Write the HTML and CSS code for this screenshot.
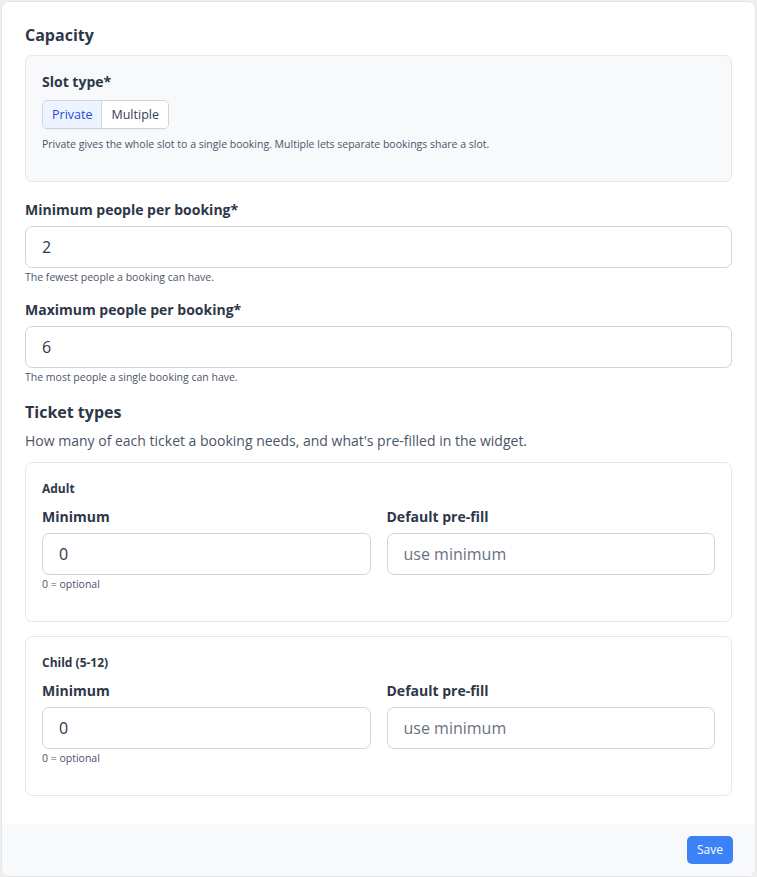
FILE: index.html
```html
<!DOCTYPE html>
<html lang="en">
<head>
  <meta charset="UTF-8">
  <meta name="viewport" content="width=device-width, initial-scale=1.0">
  <title>Capacity</title>
  <link rel="stylesheet" href="styles.css">
</head>
<body>
  <div class="card">
    <div class="card-body">
      <h2 class="section-title">Capacity</h2>

      <div class="slot-box">
        <div class="field">
          <label class="label">Slot type*</label>
          <div class="segmented">
            <button class="seg active">Private</button>
            <button class="seg">Multiple</button>
          </div>
          <p class="help help-slot">Private gives the whole slot to a single booking. Multiple lets separate bookings share a slot.</p>
        </div>
      </div>

      <div class="field">
        <label class="label">Minimum people per booking*</label>
        <input class="input" type="text" value="2">
        <p class="help">The fewest people a booking can have.</p>
      </div>

      <div class="field">
        <label class="label">Maximum people per booking*</label>
        <input class="input" type="text" value="6">
        <p class="help">The most people a single booking can have.</p>
      </div>

      <h2 class="section-title tickets-title">Ticket types</h2>
      <p class="section-desc">How many of each ticket a booking needs, and what's pre-filled in the widget.</p>

      <div class="ticket">
        <h3 class="ticket-name">Adult</h3>
        <div class="ticket-grid">
          <div class="field">
            <label class="label">Minimum</label>
            <input class="input" type="text" value="0">
            <p class="help">0 = optional</p>
          </div>
          <div class="field">
            <label class="label">Default pre-fill</label>
            <input class="input" type="text" placeholder="use minimum">
          </div>
        </div>
      </div>

      <div class="ticket">
        <h3 class="ticket-name">Child (5-12)</h3>
        <div class="ticket-grid">
          <div class="field">
            <label class="label">Minimum</label>
            <input class="input" type="text" value="0">
            <p class="help">0 = optional</p>
          </div>
          <div class="field">
            <label class="label">Default pre-fill</label>
            <input class="input" type="text" placeholder="use minimum">
          </div>
        </div>
      </div>
    </div>

    <div class="card-footer">
      <button class="save-btn">Save</button>
    </div>
  </div>
</body>
</html>
```

FILE: styles.css
```css
* {
  margin: 0;
  padding: 0;
  box-sizing: border-box;
}

body {
  font-family: "Open Sans", "Liberation Sans", sans-serif;
  background: #efefef;
  color: #2d3748;
  padding: 1px 1px 0 1px;
}

.card {
  background: #fff;
  border: 1px solid #e3e5e8;
  border-radius: 8px;
  overflow: hidden;
}

.card-body {
  padding: 21px 23px 14px 23px;
}

.section-title {
  font-size: 16px;
  line-height: 24px;
  font-weight: 700;
  color: #2d3748;
  margin-bottom: 8px;
}

.tickets-title {
  margin-bottom: 9px;
}

.slot-box {
  background: #f8f9fb;
  border: 1px solid #e5e7eb;
  border-radius: 7px;
  padding: 16px;
  margin-bottom: 18px;
}

.field {
  margin-bottom: 14px;
}

.card-body > .field {
  margin-bottom: 16px;
}

.label {
  display: block;
  font-size: 14px;
  line-height: 20px;
  font-weight: 700;
  color: #2d3748;
  margin-bottom: 6px;
}

.slot-box .label {
  margin-bottom: 8px;
}

.segmented {
  display: inline-flex;
  border: 1px solid #d1d5db;
  border-radius: 5px;
  overflow: hidden;
  box-shadow: 0 1px 1px rgba(0, 0, 0, 0.04);
}

.seg {
  font-family: inherit;
  font-size: 12.5px;
  line-height: 27px;
  padding: 0 9px;
  border: none;
  background: #fff;
  color: #374151;
  cursor: pointer;
}

.seg + .seg {
  border-left: 1px solid #d1d5db;
}

.seg.active {
  background: #eef4ff;
  color: #1d4ed8;
}

.help {
  font-size: 10.5px;
  line-height: 14px;
  color: #4a5568;
  margin-top: 2px;
}

.help-slot {
  margin-top: 8px;
}

.input {
  display: block;
  width: 100%;
  height: 42px;
  padding: 0 16px;
  font-family: inherit;
  font-size: 16px;
  color: #2d3748;
  border: 1px solid #d1d5db;
  border-radius: 7px;
  background: #fff;
  outline: none;
}

.input::placeholder {
  color: #6b7280;
}

.section-desc {
  font-size: 14px;
  line-height: 20px;
  color: #4a5568;
  margin-top: -2px;
  margin-bottom: 11px;
}

.ticket {
  border: 1px solid #e5e7eb;
  border-radius: 7px;
  padding: 18px 16px 16px 16px;
  margin-bottom: 14px;
}

.ticket-name {
  font-size: 12px;
  line-height: 16px;
  font-weight: 700;
  color: #2d3748;
  margin-bottom: 10px;
}

.ticket-grid {
  display: grid;
  grid-template-columns: 1fr 1fr;
  gap: 16px;
}

.card-footer {
  background: #f8f9fb;
  display: flex;
  justify-content: flex-end;
  padding: 12px 22px 12px 22px;
}

.save-btn {
  font-family: inherit;
  font-size: 12px;
  line-height: 28px;
  padding: 0 10px;
  border: none;
  border-radius: 5px;
  background: #3b82f6;
  color: #fff;
  cursor: pointer;
}
```
